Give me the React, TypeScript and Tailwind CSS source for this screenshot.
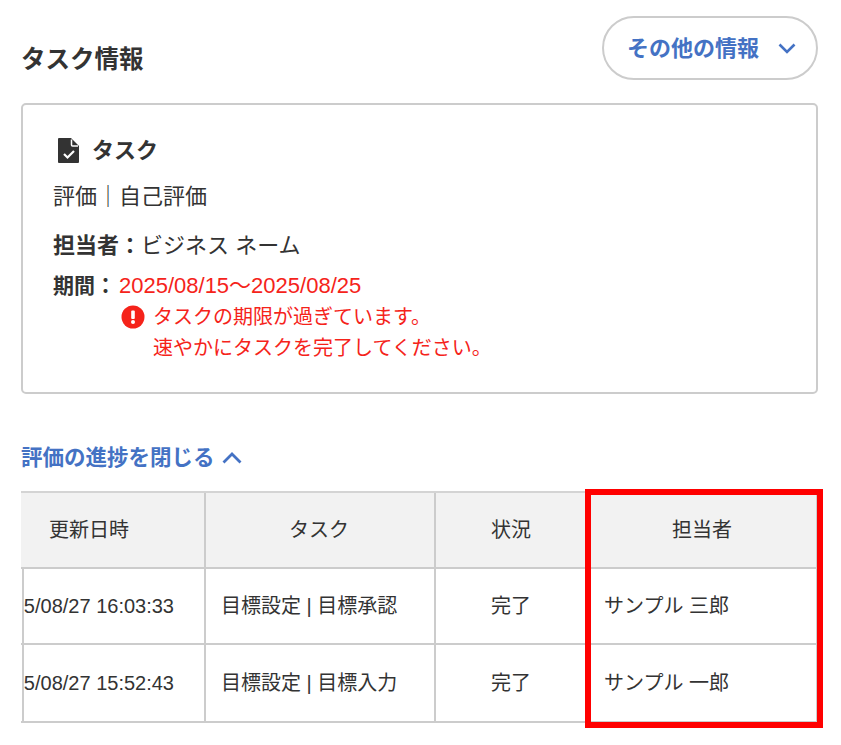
import React from 'react';

const rows = [
  { date: '2025/08/27 16:03:33', task: '目標設定 | 目標承認', status: '完了', person: 'サンプル 三郎' },
  { date: '2025/08/27 15:52:43', task: '目標設定 | 目標入力', status: '完了', person: 'サンプル 一郎' },
];

const TaskIcon = () => (
  <svg width="22" height="25" viewBox="0 0 22 25" className="shrink-0">
    <path d="M1 0h12l8 8v16a1 1 0 0 1-1 1H1a1 1 0 0 1-1-1V1a1 1 0 0 1 1-1z" fill="#333333" />
    <path d="M13.500 1.500v5.500a1 1 0 0 0 1 1h5.500" fill="none" stroke="#ffffff" strokeWidth="1.500" />
    <path d="M6 16l3.500 3.500L16 13" fill="none" stroke="#ffffff" strokeWidth="2.200" />
  </svg>
);

const AlertIcon = () => (
  <svg width="24" height="24" viewBox="0 0 24 24" className="shrink-0">
    <circle cx="12" cy="12" r="11.500" fill="#f5231a" />
    <rect x="10.200" y="5.500" width="3.600" height="8.500" rx="1" fill="#ffffff" />
    <circle cx="12" cy="17" r="2" fill="#ffffff" />
  </svg>
);

const App: React.FC = () => {
  return (
    <div className="relative h-[745px] w-[841px] overflow-hidden bg-white pl-[21px] pr-[23px] pt-[16px] font-['Liberation_Sans','Noto_Sans_CJK_JP',sans-serif] text-[#333333]">
      {/* Header */}
      <div className="flex h-[64px] items-center justify-between">
        <h1 className="mt-[24px] text-[24.500px] font-bold leading-none">タスク情報</h1>
        <button className="flex h-[64px] w-[216px] items-center rounded-full border-2 border-[#cccccc] bg-white pl-[23px] text-[22px] font-bold text-[#4472c4]">
          その他の情報
          <svg width="18" height="11" viewBox="0 0 18 11" className="ml-[19px]">
            <path d="M1.500 1.500L9 9l7.500-7.500" fill="none" stroke="#4472c4" strokeWidth="2.600" />
          </svg>
        </button>
      </div>

      {/* Task card */}
      <div className="mt-[23px] h-[291px] rounded-[5px] border-2 border-[#cccccc] pl-[30px] pt-[32px]">
        <div className="flex h-[26px] items-center gap-[12px] pl-[5px] text-[22px] font-bold">
          <TaskIcon />
          タスク
        </div>
        <div className="mt-[18px] text-[22px] leading-[32px]">評価｜自己評価</div>
        <div className="mt-[17px] text-[22px] leading-[32px]">
          <span className="font-bold">担当者：</span>ビジネス ネーム
        </div>
        <div className="mt-[8px] flex">
          <span className="w-[66px] shrink-0 text-[21px] font-bold leading-[32px]">期間：</span>
          <div className="text-[#f5231a]">
            <div className="text-[22px] leading-[32px]">2025/08/15～2025/08/25</div>
            <div className="flex h-[30px] items-center gap-[8px] pl-[2px] text-[20px]">
              <AlertIcon />
              タスクの期限が過ぎています。
            </div>
            <div className="mt-[1px] pl-[34px] text-[20px] leading-[31px]">速やかにタスクを完了してください。</div>
          </div>
        </div>
      </div>

      {/* Progress toggle */}
      <div className="mt-[48px] flex h-[32px] items-center gap-[7px] text-[21.500px] font-bold text-[#4472c4]">
        評価の進捗を閉じる
        <svg width="20" height="12" viewBox="0 0 20 12">
          <path d="M1.500 10.500L10 2l8.500 8.500" fill="none" stroke="#4472c4" strokeWidth="2.800" />
        </svg>
      </div>

      {/* Progress table */}
      <div className="mt-[17px] border-t-2 border-[#d4d4d4] text-[20px]">
        <div className="grid h-[76px] grid-cols-[185px_230px_152px_230px] items-stretch border-b-2 border-[#cccccc] bg-[#f2f2f2] text-center">
          <div className="flex items-center justify-end border-r-2 border-[#cccccc] pr-[75px]">更新日時</div>
          <div className="flex items-center justify-center border-r-2 border-[#cccccc] pr-[2px]">タスク</div>
          <div className="flex items-center justify-center border-r-2 border-[#cccccc]">状況</div>
          <div className="flex items-center justify-center border-r-2 border-[#cccccc]">担当者</div>
        </div>
        {rows.map((row, i) => (
          <div
            key={row.date}
            className={`grid grid-cols-[185px_230px_152px_230px] items-stretch border-b-2 border-[#cccccc] ${i === 0 ? 'h-[76px]' : 'h-[78px]'}`}
          >
            <div className="ml-[1px] flex items-center justify-end overflow-hidden whitespace-nowrap border-x-2 border-[#cccccc] pr-[30px]">
              {row.date}
            </div>
            <div className="flex items-center whitespace-nowrap border-r-2 border-[#cccccc] pl-[15px]">{row.task}</div>
            <div className="flex items-center justify-center border-r-2 border-[#cccccc]">{row.status}</div>
            <div className="flex items-center border-r-2 border-[#cccccc] pl-[16px]">{row.person}</div>
          </div>
        ))}
      </div>

      {/* Red highlight over the last column */}
      <div className="absolute left-[585px] top-[489px] h-[239px] w-[238px] border-[6px] border-[#ff0000]" />
    </div>
  );
};

export default App;
